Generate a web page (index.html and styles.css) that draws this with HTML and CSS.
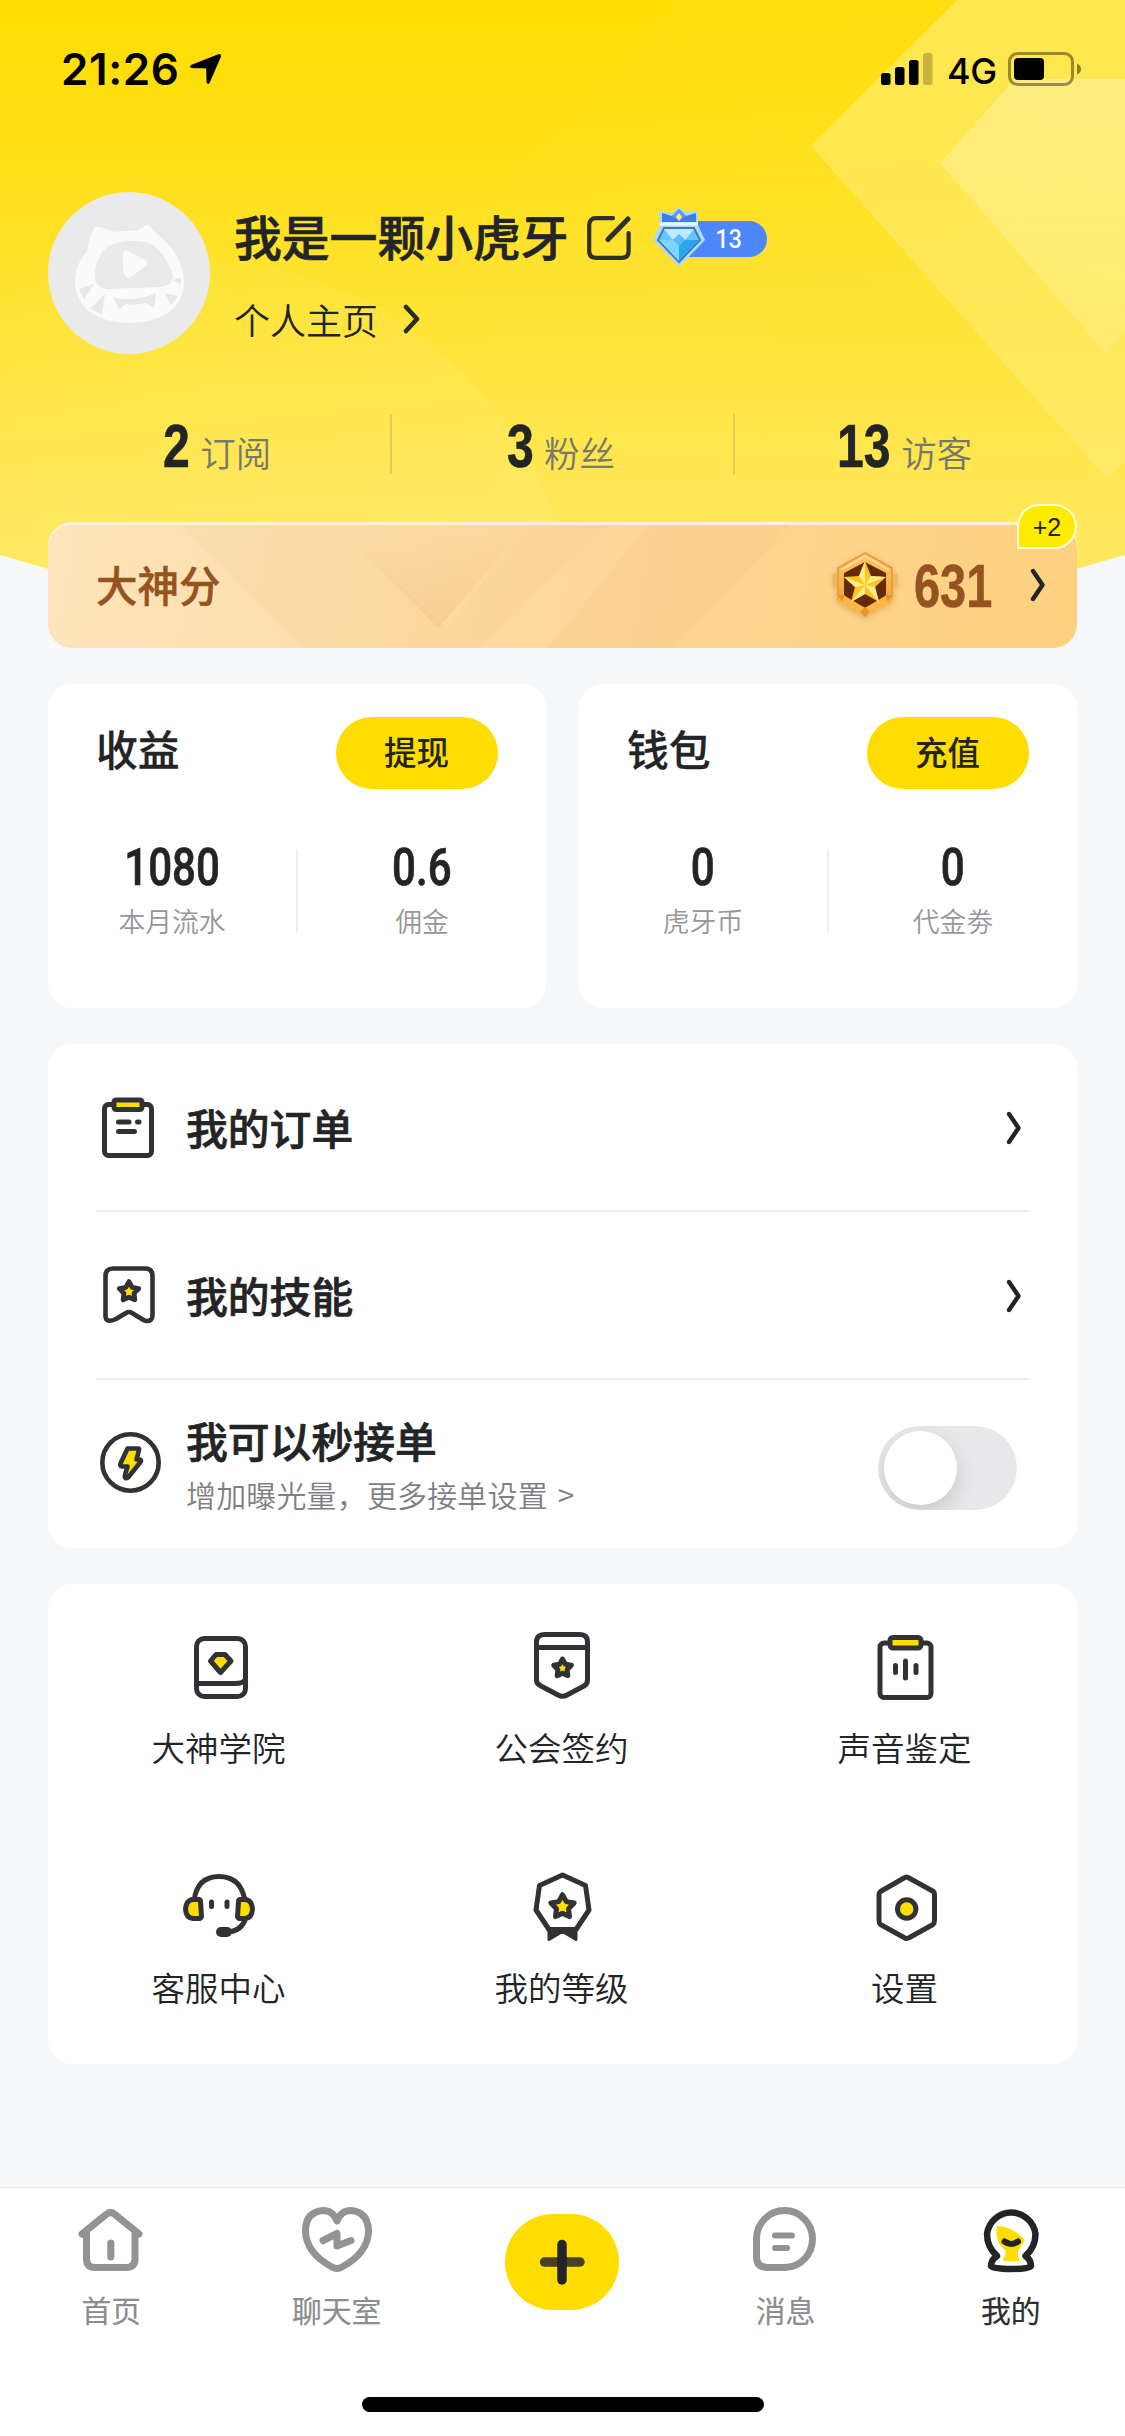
FILE: index.html
```html
<!DOCTYPE html>
<html lang="zh-CN">
<head>
<meta charset="utf-8">
<title>我的</title>
<link rel="stylesheet" href="styles.css">
</head>
<body>
<svg class="defs" width="0" height="0" aria-hidden="true">
  <defs>
    <path id="star" d="M0 -9 L2.9 -3.7 L8.8 -2.7 L4.6 1.7 L5.3 7.6 L0 5.2 L-5.3 7.6 L-4.6 1.7 L-8.8 -2.7 L-2.9 -3.7 Z"/>
    <symbol id="chevron" viewBox="0 0 16 34"><path d="M3 3 L12.5 17 L3 31" fill="none" stroke="#222426" stroke-width="4.4" stroke-linecap="round" stroke-linejoin="round"/></symbol>
  </defs>
</svg>
<div class="screen">
  <svg class="hero-bg" viewBox="0 0 1125 684" aria-hidden="true">
    <defs>
      <linearGradient id="sky" x1="0" y1="0" x2="0" y2="1"><stop offset="0" stop-color="#ffdd03"/><stop offset=".2" stop-color="#ffdf14"/><stop offset=".5" stop-color="#ffe43a"/><stop offset=".8" stop-color="#ffe860"/><stop offset="1" stop-color="#ffe966"/></linearGradient>
      <linearGradient id="beam" x1="1" y1="0" x2="0" y2="1"><stop offset="0" stop-color="#fff" stop-opacity=".05"/><stop offset="1" stop-color="#fff" stop-opacity="0"/></linearGradient>
      <linearGradient id="chev" x1="0" y1="0" x2="0" y2="1"><stop offset="0" stop-color="#fff" stop-opacity=".27"/><stop offset="1" stop-color="#fff" stop-opacity=".12"/></linearGradient>
      <linearGradient id="disc" x1="0" y1="0" x2="1" y2="0"><stop offset="0" stop-color="#fff" stop-opacity="0"/><stop offset="1" stop-color="#fff" stop-opacity=".07"/></linearGradient>
      <clipPath id="dome"><path d="M0 0H1125V555Q562 725 0 555Z"/></clipPath>
    </defs>
    <g clip-path="url(#dome)">
      <rect width="1125" height="684" fill="url(#sky)"/>
      <path d="M678 0H1125V300H404Z" fill="url(#beam)"/>
      <circle cx="184" cy="652" r="394" fill="url(#disc)"/>
      <path d="M957 0L811 146L1107 479L1125 461V0Z" fill="url(#chev)"/>
      <path d="M1015 79L940 163L1105 352L1125 332V79Z" fill="url(#chev)"/>
    </g>
  </svg>

  <div class="statusbar">
    <span class="clock">21:26</span>
    <svg class="locate" width="31" height="30" viewBox="0 0 31 30"><path d="M28 .8Q31.500 -.5 30.400 3L19.400 28.400Q18 31.500 17 28L16.600 15.400Q16.500 14 15.200 13.900L2.500 13.700Q-1.500 13 1.500 11.200Z" stroke="#000" stroke-width=".8"/></svg>
    <svg class="signal" width="52" height="32" viewBox="0 0 52 32"><rect y="20" width="9.500" height="12" rx="2.500"/><rect x="14" y="14" width="9.500" height="18" rx="2.500"/><rect x="28" y="7" width="9.500" height="25" rx="2.500"/><rect x="42" width="9.500" height="32" rx="2.500" opacity=".22"/></svg>
    <span class="network">4G</span>
    <svg class="battery" width="74" height="34" viewBox="0 0 74 34"><rect x="1.500" y="1.500" width="63" height="31" rx="8" fill="none" stroke="#000" stroke-opacity=".4" stroke-width="3"/><rect x="6" y="6" width="30" height="22" rx="4"/><path d="M69 11.500Q73 13 73 17T69 22.500Z" opacity=".45"/></svg>
  </div>

  <section class="profile">
    <svg class="avatar" width="162" height="162" viewBox="0 0 162 162">
      <circle cx="81" cy="81" r="81" fill="#eaeaea"/>
      <path d="M46 36Q48 34 52 35L67 40Q81 38 88 39L98 33Q102 33 104 37L119 51Q135 68 136 89Q136 110 120 121Q104 131 81 131Q58 131 42 120Q27 108 27 88Q28 70 39 60Q41 46 46 36Z" fill="#fafafa"/>
      <path d="M81 49Q103 47 114 62Q125 78 125 86Q123 94 112 95L60 97Q48 97 47 84Q46 74 53 62Q60 50 81 49Z" fill="#eaeaea"/>
      <path d="M75 62Q75 57 80 59L97 68Q101 71 98 74L83 85Q77 87 76 81Q74 72 75 62Z" fill="#fafafa"/>
      <path d="M31 97L46 92L36 107ZM42 117L57 102L54 122ZM65 105Q86 111 108 101L106 116L98 111Q86 114 78 112L71 117ZM117 101L130 104L123 113ZM124 88L133 86L133 92Z" fill="#e8e8e8"/>
    </svg>
    <div class="identity">
      <div class="name-row">
        <h1 class="name">我是一颗小虎牙</h1>
        <svg class="edit" width="44" height="44" viewBox="0 0 44 44" fill="none" stroke="#2f302b" stroke-linecap="round"><path d="M26 2.200H9Q2.200 2.200 2.200 9V35Q2.200 41.800 9 41.800H35Q41.600 41.800 41.600 35V17" stroke-width="4.200"/><path d="M41 3L21 23.500" stroke-width="5"/></svg>
        <div class="level">
          <svg class="gem" width="56" height="62" viewBox="0 0 56 62">
            <path d="M28 1L34 6L47 5L47 19L54 34L28 61L2 34L9 19L8 5L21 7Z" fill="#a9dcf6"/>
            <path d="M28 3L35 10L45 7V16H11V7L21 10Z" fill="#3f7de3"/><path d="M28 3L35 10L28 15L21 10Z" fill="#5a98ef"/><path d="M28 7L31 11L28 15L25 11Z" fill="#ffe98b"/>
            <path d="M9 18H47" stroke="#e5f6ff" stroke-width="3"/>
            <path d="M13 22H43L49 34L28 56L7 34Z" fill="#64c7fb" stroke="#4378b6" stroke-width="2"/>
            <path d="M13 23L22 34L28 28L34 34L43 23Z" fill="#bdeaff"/><path d="M22 34L28 28L34 34L28 40Z" fill="#5fb9f6"/><path d="M34 34H48L28 55V40Z" fill="#2ba5ee"/><path d="M8 34H22L28 40V55Z" fill="#7cd7ff"/>
          </svg>
          <span class="level-pill"><span class="level-num">13</span></span>
        </div>
      </div>
      <a class="homepage">个人主页<svg width="17" height="30" viewBox="0 0 17 30"><path d="M3 3L14 15L3 27" fill="none" stroke="#292b22" stroke-width="4.600" stroke-linecap="round" stroke-linejoin="round"/></svg></a>
    </div>
  </section>

  <section class="stats">
    <div class="stat"><b class="count">2</b><span>订阅</span></div>
    <div class="stat"><b class="count">3</b><span>粉丝</span></div>
    <div class="stat"><b class="count two">13</b><span>访客</span></div>
  </section>

  <section class="score">
    <svg class="score-bg" viewBox="0 0 1029 126" aria-hidden="true"><defs><linearGradient id="tri" x1="0" y1="0" x2="0" y2="1"><stop offset="0" stop-color="#dda56c" stop-opacity=".03"/><stop offset="1" stop-color="#dda56c" stop-opacity=".2"/></linearGradient></defs><path d="M130 3H288L398 106L480 3H560L430 126H256Z" fill="#e5a768" opacity=".06"/><path d="M288 3H480L390 106Z" fill="url(#tri)"/><path d="M600 3H742L628 126H500Z" fill="#e5a768" opacity=".08"/></svg>
    <h2 class="score-title">大神分</h2>
    <svg class="medal" width="68" height="70" viewBox="0 0 68 70">
      <defs><linearGradient id="gold" x1="0" y1="0" x2="0" y2="1"><stop offset="0" stop-color="#ffc66b"/><stop offset="1" stop-color="#ef9a26"/></linearGradient></defs>
      <path d="M4 24Q2 31 5 36M64 24Q66 31 63 36" fill="none" stroke="#eeb766" stroke-width="4"/>
      <path d="M34 3L61 18V49L34 65L7 49V18Z" fill="url(#gold)" stroke="#e39a37" stroke-width="1.500"/>
      <path d="M34 6L58 20" stroke="#ffe0a0" stroke-width="2"/><path d="M34 6L10 20" stroke="#ffe0a0" stroke-width="2"/>
      <path d="M34 12L55 23V46L34 58L13 46V23Z" fill="#66290a"/>
      <path d="M5 44L14 46L34 58L54 46L63 44L60 52L34 66L8 52Z" fill="#fdb548"/><path d="M34 57L39 62L34 67L29 62ZM6 45L14 45L11 52ZM62 45L54 45L57 52Z" fill="#e8942c"/>
      <path d="M34 11L40 26L55 27L44 37L48 52L34 44L20 52L24 37L13 27L28 26Z" fill="#ffc51f"/>
      <path d="M34 11L34 35L28 26ZM55 27L34 35L40 26ZM48 52L34 35L44 37ZM20 52L34 35L34 44ZM13 27L34 35L24 37Z" fill="#ffed8c"/>
    </svg>
    <b class="score-num">631</b>
    <svg class="score-arrow"><use href="#chevron"/></svg>
    <span class="bump">+2</span>
  </section>

  <section class="money">
    <div class="card money-card">
      <div class="money-head"><h3>收益</h3><button class="pill">提现</button></div>
      <div class="money-body">
        <div class="figure"><b>1080</b><span>本月流水</span></div>
        <div class="figure"><b>0.6</b><span>佣金</span></div>
      </div>
    </div>
    <div class="card money-card">
      <div class="money-head"><h3>钱包</h3><button class="pill">充值</button></div>
      <div class="money-body">
        <div class="figure"><b>0</b><span>虎牙币</span></div>
        <div class="figure"><b>0</b><span>代金劵</span></div>
      </div>
    </div>
  </section>

  <section class="card menu">
    <a class="row">
      <svg class="row-icon" width="66" height="66" viewBox="0 0 66 66" fill="none" stroke="#303236" stroke-width="5" stroke-linecap="round"><rect x="8.500" y="10.500" width="47" height="51" rx="4"/><rect x="18" y="6" width="28" height="9.500" rx="2" fill="#fd0"/><path d="M22.500 28H33M41.500 28H43M22.500 37.500H38.500"/></svg>
      <span class="row-title">我的订单</span><svg class="arrow"><use href="#chevron"/></svg>
    </a>
    <a class="row">
      <svg class="row-icon" width="66" height="66" viewBox="0 0 66 66" fill="none" stroke="#303236" stroke-width="4.600" stroke-linejoin="round"><path d="M17 6.500H49Q56.500 6.500 56.500 14V53Q56.500 59.500 50 59Q48 58.500 45 56.500L36 51Q33 49 30 51L20 57Q9.500 61.500 9.500 54V14Q9.500 6.500 17 6.500Z"/><use href="#star" transform="translate(33 29.500) scale(1.100)" fill="#fd0" stroke-width="4.400"/></svg>
      <span class="row-title">我的技能</span><svg class="arrow"><use href="#chevron"/></svg>
    </a>
    <div class="row">
      <svg class="row-icon bolt" width="66" height="66" viewBox="0 0 66 66" fill="none" stroke="#303236" stroke-width="4.600" stroke-linejoin="round"><circle cx="34.500" cy="31.500" r="28.200"/><path d="M31.500 17.500H42Q43.500 17.500 43 19L40.500 28.500H43.500Q46 29 44.500 31L32.500 46Q28 49 29 44L31.500 35.500H26Q23.500 35 24.500 32.500Z" fill="#fd0"/></svg>
      <div class="row-text"><span class="row-title">我可以秒接单</span><span class="row-sub">增加曝光量，更多接单设置 &gt;</span></div>
      <span class="toggle"><span class="knob"></span></span>
    </div>
  </section>

  <section class="card tools">
    <a class="tool"><svg width="74" height="74" viewBox="0 0 74 74" fill="none" stroke="#303236" stroke-width="5" stroke-linejoin="round"><rect x="14.500" y="8.500" width="49" height="58" rx="8"/><path d="M15 53.500H53Q61 53.500 63 50"/><path d="M34 24.500H43L49 31L38.500 42.500L28.500 31Z" fill="#fd0"/></svg><span>大神学院</span></a>
    <a class="tool"><svg width="74" height="74" viewBox="0 0 74 74" fill="none" stroke="#303236" stroke-width="5" stroke-linejoin="round"><path d="M20 4.500H55Q62.500 4.500 62.500 12V50Q62.500 54 59 56L42 65Q37.500 67.500 33 65L16 56Q11.500 54 11.500 50V12Q11.500 4.500 20 4.500ZM11.500 17.500H62.500"/><use href="#star" transform="translate(37.500 38)" fill="#fd0"/></svg><span>公会签约</span></a>
    <a class="tool"><svg width="74" height="74" viewBox="0 0 74 74" fill="none" stroke="#303236" stroke-width="5" stroke-linecap="round"><rect x="12" y="13" width="51" height="54.500" rx="4"/><rect x="22" y="7.500" width="31" height="10.500" rx="3" fill="#fd0"/><path d="M27.500 35.500V42.500M37.500 31V48M48 35.500V42.500"/></svg><span>声音鉴定</span></a>
    <a class="tool"><svg width="74" height="74" viewBox="0 0 74 74" fill="none" stroke="#303236" stroke-width="5" stroke-linejoin="round" stroke-linecap="round"><path d="M12 31Q15 6.500 37 6.500T63 31M64 47Q60 62 44 62"/><path d="M10 29.500H16.500Q18.500 29.500 18.500 31.500L19.500 47L18 48.500H11Q4 48 3.500 39Q4 31 10 29.500ZM64 29.500H58.500Q56.500 29.500 56.500 31.500L55.500 47L57 48.500H63Q70 48 70.500 39Q70 31 64 29.500Z" fill="#fd0"/><path d="M29.500 32V36.500M45 32V36.500"/><path d="M39 62H45" stroke-width="10"/></svg><span>客服中心</span></a>
    <a class="tool"><svg width="74" height="74" viewBox="0 0 74 74" fill="none" stroke="#303236" stroke-width="5" stroke-linejoin="round"><path d="M37.500 5L60.500 15.500L64 40L51 59.500H24L11 40L14.500 15.500Z"/><path d="M24 60H51V69.500L37.500 61.500L24 69.500Z" fill="#303236" stroke-width="3"/><use href="#star" transform="translate(37.500 36.500) scale(1.320)" fill="#fd0" stroke-width="3.800"/></svg><span>我的等级</span></a>
    <a class="tool"><svg width="74" height="74" viewBox="0 0 74 74" fill="none" stroke="#303236" stroke-width="5" stroke-linejoin="round"><path d="M36 8Q38.500 6 41 8L65.500 21.500Q66.500 22.500 66.500 25V50Q66.500 53 65 54.500L41.500 67.500Q38.500 69.500 36 67.500L12.500 54.500Q11 53 11 50V25Q11 22.500 12.500 21.500Z"/><circle cx="38.700" cy="39" r="9.200" fill="#fd0"/></svg><span>设置</span></a>
  </section>

  <nav class="tabbar">
    <div class="tabs">
      <a class="tab"><svg width="72" height="72" viewBox="0 0 72 72" fill="none" stroke="#929395" stroke-width="7" stroke-linecap="round" stroke-linejoin="round"><path d="M7 31L31 11.500Q35.500 7.500 40 11.500L64 31M11.500 31V56Q11.500 64.500 20 64.500H51Q60 64.500 60 56V31M35.800 40V54"/></svg><span>首页</span></a>
      <a class="tab"><svg width="72" height="72" viewBox="0 0 72 72" fill="none" stroke="#929395" stroke-width="7" stroke-linecap="round" stroke-linejoin="round"><path d="M36 18Q32 7.500 22 7.500Q4.500 9 4.500 28Q5 50 31 64Q36 67 41 64Q67 50 67.500 28Q67 9 50 7.500Q40 7.500 36 18Z"/><path d="M22 37.500L36 30.500V43L50 37.500"/></svg><span>聊天室</span></a>
      <a class="tab add"><svg width="114" height="96" viewBox="0 0 114 96"><rect width="114" height="96" rx="48" fill="#fd0"/><path d="M39.500 48H75" stroke="#474023" stroke-width="9.500" stroke-linecap="round"/><path d="M57 30.500V66" stroke="#222429" stroke-width="9.500" stroke-linecap="round"/></svg></a>
      <a class="tab"><svg width="72" height="72" viewBox="0 0 72 72" fill="none" stroke="#929395" stroke-width="7" stroke-linecap="round" stroke-linejoin="round"><path d="M35.500 7.500A28 28.500 0 0 1 35.500 64.500H19Q7.500 64.500 7.500 54V36A28 28.500 0 0 1 35.500 7.500Z"/><path d="M26 32.500H43M26 45H38" stroke-width="6"/></svg><span>消息</span></a>
      <a class="tab active"><svg width="72" height="72" viewBox="0 0 72 72" fill="none" stroke="#222426" stroke-width="7" stroke-linecap="round" stroke-linejoin="round"><path d="M22 23Q37 23 50 37L46 43Q41 49 44 55V58H28L29 54Q33 48 27 44Q20 37 22 23Z" fill="#fd0" stroke="none"/><path d="M22 53Q12 44 12 31A24.500 25 0 0 1 60.500 31Q60.500 44 50.500 53Q56 57 56 63Q55 66 36.500 66T16 63Q16 57 22 53Z" stroke-width="6.500"/><path d="M29.500 38.500Q36 43.500 43 38.500" stroke-width="6"/></svg><span>我的</span></a>
    </div>
    <div class="home-indicator"></div>
  </nav>
</div>
</body>
</html>
```
FILE: styles.css
```css
* { box-sizing: border-box; }
body { margin: 0; background: #f7f8fa; }
svg { display: block; flex: none; }
h1, h2, h3 { margin: 0; font-weight: 500; }
.defs { position: absolute; }

.screen {
  position: relative;
  display: flex;
  flex-direction: column;
  width: 1125px;
  height: 2436px;
  overflow: hidden;
  background: #f7f8fa;
  color: #222426;
  font-family: "Noto Sans CJK SC", sans-serif;
}
.hero-bg { position: absolute; left: 0; top: 0; width: 1125px; height: 684px; }

/* Status bar */
.statusbar {
  position: relative;
  display: flex;
  align-items: center;
  height: 138px;
  padding: 0 43px 0 61px;
  color: #000;
  font-family: Inter, sans-serif;
}
.clock { width: 118px; font-size: 44px; font-weight: 600; letter-spacing: .6px; white-space: nowrap; }
.locate { margin-left: 11px; }
.signal { margin-left: auto; }
.network { margin-left: 14px; width: 61px; font-size: 36px; font-weight: 500; letter-spacing: -.5px; padding-top: 3px; }

/* Profile */
.profile { position: relative; display: flex; gap: 25px; height: 162px; margin: 54px 48px 0; }
.identity { padding-top: 13px; }
.name-row { display: flex; align-items: center; height: 66px; }
.name { width: 336px; font-size: 47.8px; line-height: 66px; margin: -5px 0 0 -1px; white-space: nowrap; -webkit-text-stroke: .7px #222426; }
.edit { margin-left: 17px; }
.level { display: flex; align-items: center; margin-left: 20px; }
.gem { position: relative; z-index: 1; margin-top: -2px; }
.level-pill {
  display: flex;
  align-items: center;
  justify-content: center;
  width: 90px;
  height: 36px;
  margin: 2px 0 0 -30px;
  padding-left: 14px;
  border-radius: 0 18px 18px 0;
  background: #4d87fb;
  color: #fff;
  font: 500 26px Roboto, sans-serif;
}
.level-num { transform: scaleX(.9); }
.homepage { display: flex; align-items: center; gap: 25px; margin: 23px 0 0 -1px; font-size: 36px; line-height: 50px; font-weight: 350; }

/* Stats */
.stats { position: relative; display: flex; height: 60px; margin: 60px 48px 48px; }
.stat { flex: 1; display: flex; align-items: baseline; justify-content: center; gap: 10px; padding: 2px 3px 0 0; line-height: 60px; font-size: 35.5px; font-weight: 350; color: #77796d; }
.stat + .stat { border-left: 2px solid #e1cc58; }
.count { width: 27px; font: 700 61px/60px "Liberation Sans", sans-serif; transform: scaleX(.79); transform-origin: left; color: #222426; -webkit-text-stroke: .6px #222426; }
.count.two { width: 54px; }

/* Score banner */
.score {
  position: relative;
  display: flex;
  align-items: center;
  height: 126px;
  margin: 0 48px 36px;
  padding: 0 31px 0 48px;
  border-radius: 24px;
  background: linear-gradient(100deg, #fee5bc, #fdd79b 50%, #ffd07e);
  box-shadow: inset 0 3px 0 #fff1d9;
  color: #95531f;
}
.score-bg { position: absolute; left: 0; top: 0; width: 1029px; height: 126px; }
.score-title { font-size: 41.5px; margin-top: -3px; -webkit-text-stroke: .5px #95531f; }
.medal { margin-left: auto; filter: drop-shadow(0 2px 3px rgba(184, 108, 23, .4)); }
.score-num { width: 92px; margin: 3px 0 0 15px; font: 700 61px/1 "Liberation Sans", sans-serif; transform: scaleX(.77); transform-origin: left; -webkit-text-stroke: .5px #95531f; }
.score-arrow { width: 16px; height: 34px; margin-left: 24px; }
.bump {
  position: absolute;
  right: 0;
  top: -18px;
  width: 60px;
  height: 45px;
  border: 2px solid #fffde0;
  border-radius: 24px 24px 24px 0;
  background: #ffeb00;
  color: #222;
  font: 25px/43px "Liberation Sans", sans-serif;
  text-align: center;
}

/* Cards */
.card { background: #fff; border-radius: 24px; }
.money { display: flex; gap: 33px; margin: 0 48px 36px; }
.money-card { flex: 1; height: 324px; padding-top: 33px; }
.money-head { display: flex; align-items: center; justify-content: space-between; height: 72px; padding: 0 48px; }
.money-head h3 { font-size: 41.8px; line-height: 60px; margin-top: -11px; -webkit-text-stroke: .3px #222426; }
.pill { width: 162px; height: 72px; padding: 0 1px 5px 0; border: 0; border-radius: 36px; background: #fd0; color: #222418; font: 500 32.5px "Noto Sans CJK SC", sans-serif; }
.money-body { display: flex; margin-top: 60px; height: 84px; }
.figure { flex: 1; display: flex; flex-direction: column; align-items: center; }
.figure + .figure { border-left: 2px solid #ebeef5; }
.figure b { font: 500 52px/38px Roboto, sans-serif; transform: scaleX(.81); -webkit-text-stroke: .7px #222426; }
.figure span { margin-top: 14px; font-size: 26.8px; line-height: 40px; font-weight: 350; color: #96979b; }

/* Menu */
.menu { margin: 0 48px 36px; padding: 0 48px; }
.row { display: flex; align-items: center; height: 168px; }
.row:not(:last-child) { border-bottom: 2px solid #ebecf5; }
.row-icon { margin-right: 24px; }
.row-title { font-size: 41.8px; line-height: 56px; font-weight: 500; -webkit-text-stroke: .7px #222426; }
.row-text { display: flex; flex-direction: column; margin-top: 3px; }
.row-sub { margin-top: 1px; font-size: 30px; line-height: 50px; font-weight: 350; letter-spacing: .15px; word-spacing: 3px; color: #7e7f83; }
.arrow { width: 16px; height: 36px; margin: 2px 7px 0 auto; }
.toggle { width: 139px; height: 84px; margin: 8px 12px 0 auto; padding: 5px 6px; border-radius: 42px; background: #e8e8ea; overflow: hidden; }
.knob { display: block; width: 73px; height: 74px; border-radius: 50%; background: #fff; box-shadow: 0 8px 20px rgba(0, 0, 0, .14); }

/* Tools */
.tools { display: grid; grid-template-columns: repeat(3, 1fr); grid-auto-rows: 240px; margin: 0 48px; }
.tool { display: flex; flex-direction: column; align-items: center; padding: 46px 2px 0 0; font-size: 33.5px; line-height: 50px; font-weight: 350; }
.tool span { margin-top: 18px; }

/* Tab bar */
.tabbar { height: 249px; margin-top: auto; border-top: 1px solid #e9eaee; background: #fff; }
.tabs { display: flex; height: 209px; }
.tab { flex: 1; display: flex; flex-direction: column; align-items: center; padding: 15px 3px 0 0; color: #8c8d8f; font-size: 29.8px; line-height: 44px; font-weight: 400; -webkit-text-stroke: .2px currentColor; }
.tab span { margin-top: 12px; }
.tab.add { padding: 26px 1px 0 0; }
.tab.active { color: #2d2e30; }
.home-indicator { width: 402px; height: 15px; margin: 0 auto; border-radius: 8px; background: #000; }
```
